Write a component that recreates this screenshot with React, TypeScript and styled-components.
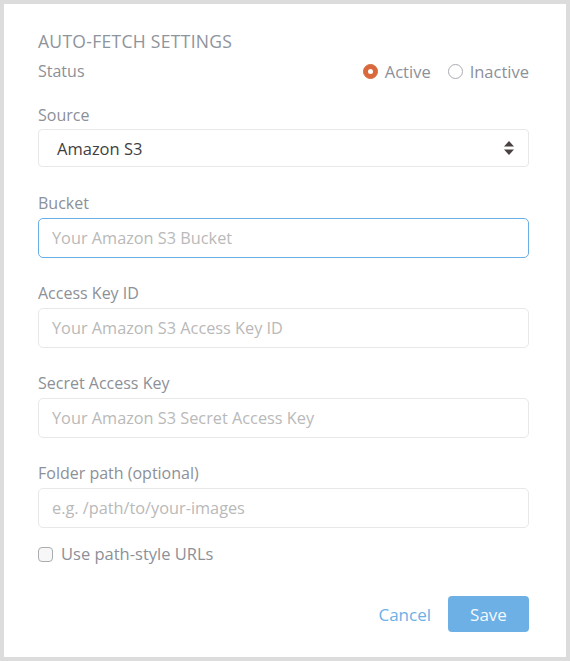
import React, { useState } from 'react';
import styled, { createGlobalStyle } from 'styled-components';

const GlobalStyle = createGlobalStyle`
  html, body {
    margin: 0;
    padding: 0;
    background: #dcdcdc;
  }
  * {
    box-sizing: border-box;
  }
`;

const Card = styled.div`
  margin: 4px;
  width: 562px;
  height: 653px;
  background: #ffffff;
  padding: 26px 37px 0 34px;
  font-family: 'Open Sans', 'Noto Sans', sans-serif;
  color: #8c9098;
  display: flex;
  flex-direction: column;
`;

const Title = styled.h2`
  margin: 0;
  font-size: 17.5px;
  font-weight: 400;
  line-height: 22px;
  letter-spacing: 0.3px;
  color: #8e949c;
`;

const StatusRow = styled.div`
  display: flex;
  align-items: center;
  justify-content: space-between;
  margin-top: 8px;
  height: 22px;
`;

const Label = styled.label`
  display: block;
  font-size: 16px;
  line-height: 22px;
  color: #8c9098;
`;

const RadioGroup = styled.div`
  display: flex;
  align-items: center;
  gap: 17px;
`;

const RadioOption = styled.label`
  display: flex;
  align-items: center;
  gap: 7px;
  font-size: 16.5px;
  color: #8c9098;
  cursor: pointer;
`;

const RadioDot = styled.span<{ $checked: boolean }>`
  width: 15px;
  height: 15px;
  border-radius: 50%;
  display: inline-flex;
  align-items: center;
  justify-content: center;
  background: ${p => (p.$checked ? '#d9693c' : '#ffffff')};
  border: 1px solid ${p => (p.$checked ? '#d9693c' : '#a9acb0')};

  &::after {
    content: '';
    width: 5px;
    height: 5px;
    border-radius: 50%;
    background: #ffffff;
    display: ${p => (p.$checked ? 'block' : 'none')};
  }
`;

const Field = styled.div<{ $gap?: number }>`
  margin-top: ${p => p.$gap ?? 24}px;
  display: flex;
  flex-direction: column;
`;

const SelectBox = styled.div`
  margin-top: 3px;
  height: 38px;
  border: 1px solid #e8e8e8;
  border-radius: 4px;
  display: flex;
  align-items: center;
  justify-content: space-between;
  padding: 0 14px 0 18px;
  font-size: 16.5px;
  color: #3f3f3f;
`;

const Input = styled.input<{ $active?: boolean }>`
  margin-top: 4px;
  height: 40px;
  width: 100%;
  border: 1px solid ${p => (p.$active ? '#6aaee6' : '#e8e8e8')};
  border-radius: 5px;
  padding: 0 13px;
  font-family: inherit;
  font-size: 16.3px;
  color: #3f3f3f;
  outline: none;
  background: #ffffff;

  &::placeholder {
    color: #b9b9b9;
  }
`;

const CheckRow = styled.label`
  margin-top: 15px;
  display: flex;
  align-items: center;
  gap: 8px;
  font-size: 16.5px;
  line-height: 22px;
  color: #8c9098;
`;

const CheckBox = styled.span`
  width: 15px;
  height: 15px;
  border: 1px solid #a9acb0;
  border-radius: 4px;
  background: #f7f7f7;
`;

const Actions = styled.div`
  margin-top: 31px;
  display: flex;
  justify-content: flex-end;
  align-items: center;
  gap: 17px;
`;

const LinkButton = styled.button`
  border: none;
  background: none;
  padding: 0;
  font-family: inherit;
  font-size: 17px;
  color: #6cb0e6;
  cursor: pointer;
`;

const SaveButton = styled.button`
  width: 81px;
  height: 36px;
  border: none;
  border-radius: 4px;
  background: #6cb0e6;
  color: #f4f8fc;
  font-family: inherit;
  font-size: 17px;
  cursor: pointer;
`;

const Arrows = () => (
  <svg width="10" height="14" viewBox="0 0 10 14">
    <path d="M5 0 L10 5.5 L0 5.5 Z" fill="#4a4242" />
    <path d="M5 14 L10 8.5 L0 8.5 Z" fill="#4a4242" />
  </svg>
);

export default function App() {
  const [active, setActive] = useState(true);

  return (
    <>
      <GlobalStyle />
      <Card>
        <Title>AUTO-FETCH SETTINGS</Title>
        <StatusRow>
          <Label as="span">Status</Label>
          <RadioGroup>
            <RadioOption onClick={() => setActive(true)}>
              <RadioDot $checked={active} />
              Active
            </RadioOption>
            <RadioOption onClick={() => setActive(false)}>
              <RadioDot $checked={!active} />
              Inactive
            </RadioOption>
          </RadioGroup>
        </StatusRow>

        <Field $gap={22}>
          <Label>Source</Label>
          <SelectBox>
            <span>Amazon S3</span>
            <Arrows />
          </SelectBox>
        </Field>

        <Field $gap={25}>
          <Label>Bucket</Label>
          <Input $active autoFocus placeholder="Your Amazon S3 Bucket" />
        </Field>

        <Field>
          <Label>Access Key ID</Label>
          <Input placeholder="Your Amazon S3 Access Key ID" />
        </Field>

        <Field>
          <Label>Secret Access Key</Label>
          <Input placeholder="Your Amazon S3 Secret Access Key" />
        </Field>

        <Field>
          <Label>Folder path (optional)</Label>
          <Input placeholder="e.g. /path/to/your-images" />
        </Field>

        <CheckRow>
          <CheckBox />
          Use path-style URLs
        </CheckRow>

        <Actions>
          <LinkButton>Cancel</LinkButton>
          <SaveButton>Save</SaveButton>
        </Actions>
      </Card>
    </>
  );
}
